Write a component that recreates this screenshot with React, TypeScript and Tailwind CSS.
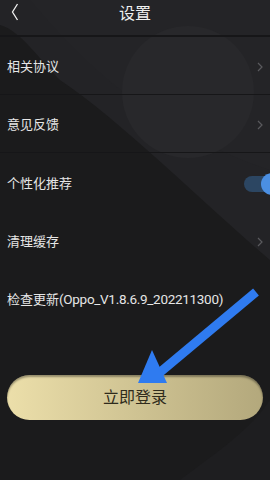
import React from "react";

const Chevron = () => (
  <svg width="6" height="10" viewBox="0 0 6 10" className="shrink-0">
    <path d="M1 1 L5 5 L1 9" fill="none" stroke="#5a5a5e" strokeWidth="1.2" />
  </svg>
);

const Row = ({ label, right, border = true }: { label: React.ReactNode; right?: React.ReactNode; border?: boolean }) => (
  <div className={`flex items-center justify-between h-[58px] pt-[3px] pl-[7px] pr-[7px] ${border ? "border-b border-[#161618]" : ""}`}>
    <span className="text-[13px] text-[#e6e6e6]">{label}</span>
    {right}
  </div>
);

const App = () => {
  return (
    <div
      className="relative w-[270px] h-[480px] overflow-hidden bg-[#1b1b1c]"
      style={{ fontFamily: 'Roboto, "Noto Sans CJK SC", sans-serif' }}
    >
      {/* background shapes */}
      <svg className="absolute inset-0" width="270" height="480" viewBox="0 0 270 480">
        <path d="M0 0 H270 V260 C200 200 120 120 60 80 C40 60 20 30 0 25 Z" fill="#232326" />
        <path d="M30 0 C80 60 150 130 270 170 V0 Z" fill="#242427" />
        <ellipse cx="188" cy="92" rx="66" ry="66" fill="#28282b" />
        <path d="M180 480 C220 450 250 430 270 400 V480 Z" fill="#1e1e20" />
      </svg>

      <div className="relative flex flex-col">
        <div className="relative flex items-center justify-center h-[37px] border-b-2 border-[#161618]">
          <svg className="absolute left-[11px] top-[3px]" width="8" height="18" viewBox="0 0 8 18">
            <path d="M6.5 1 L1.5 9 L6.5 17" fill="none" stroke="#f0f0f0" strokeWidth="1.3" />
          </svg>
          <span className="text-[16px] text-[#f0f0f0] -mt-[7px]">设置</span>
        </div>

        <Row label="相关协议" right={<Chevron />} />
        <Row label="意见反馈" right={<Chevron />} />
        <Row
          label="个性化推荐"
          border={false}
          right={
            <div className="relative w-[26px] h-[22px] -mr-[7px]">
              <div className="absolute left-0 top-[3px] w-[30px] h-[16px] rounded-full bg-[#2c4662]" />
              <div className="absolute left-[17px] top-0 w-[22px] h-[22px] rounded-full bg-[#4b8fe2]" />
            </div>
          }
        />
        <Row label="清理缓存" right={<Chevron />} border={false} />
        <Row
          label={
            <>
              检查更新<span className="tracking-[-0.3px] text-[13.5px]">(Oppo_V1.8.6.9_202211300)</span>
            </>
          }
          border={false}
        />

        <div className="px-[7px] pt-[48px]">
          <div className="h-[45px] rounded-full bg-gradient-to-r from-[#ecdfaa] to-[#b3a87c] flex items-center justify-center shadow-[inset_0_2px_2px_rgba(0,0,0,0.35)]">
            <span className="text-[16px] text-[#2f2b1c]">立即登录</span>
          </div>
        </div>
      </div>

      {/* annotation arrow */}
      <svg className="absolute inset-0 pointer-events-none" width="270" height="480" viewBox="0 0 270 480">
        <line x1="256" y1="292" x2="158" y2="374" stroke="#2f7bf0" strokeWidth="9" />
        <polygon points="152,350 138,383 167,383" fill="#2f7bf0" />
      </svg>
    </div>
  );
};

export default App;
